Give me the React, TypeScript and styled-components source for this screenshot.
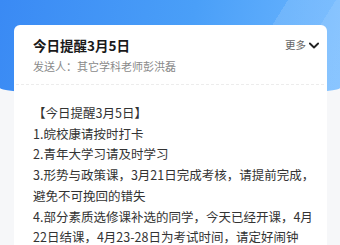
import React from "react";
import styled, { createGlobalStyle } from "styled-components";

const Global = createGlobalStyle`
  html, body { margin: 0; padding: 0; }
  body {
    background: #f6f7f9;
    font-family: "Noto Sans CJK SC", "Noto Sans", sans-serif;
    width: 340px;
    height: 245px;
    overflow: hidden;
  }
`;

const Page = styled.div`
  width: 340px;
  height: 245px;
  overflow: hidden;
`;

const Banner = styled.div`
  height: 96px;
  border-radius: 0 0 50% 50% / 0 0 8px 8px;
  background:
    linear-gradient(122deg, transparent 0 72%, rgba(255,255,255,0.12) 72% 84%, rgba(255,255,255,0.2) 84% 100%),
    linear-gradient(100deg, #3a8af4 0%, #4a9ff8 55%, #6db7ff 100%);
`;

const Card = styled.div`
  margin: -71px 13px 0 14px;
  background: #ffffff;
  border-radius: 6px 6px 0 0;
  height: 230px;
`;

const Header = styled.div`
  display: flex;
  flex-direction: column;
  padding: 10px 4px 8px 17px;
  border-bottom: 1px dashed #ececec;
  margin: 0 3px 0 2px;
`;

const TitleRow = styled.div`
  display: flex;
  align-items: center;
  justify-content: space-between;
  height: 20px;
`;

const Title = styled.div`
  font-size: 13.5px;
  font-weight: 700;
  color: #1a1a1a;
  line-height: 20px;
`;

const More = styled.div`
  display: flex;
  align-items: center;
  gap: 2px;
  font-size: 10.5px;
  color: #666;
  line-height: 20px;
`;

const Sender = styled.div`
  font-size: 11px;
  color: #8a8a8a;
  line-height: 20px;
  margin-top: 1px;
`;

const Body = styled.div`
  padding: 18px 12px 0 19px;
  font-size: 12.5px;
  line-height: 20.7px;
  color: #333;
`;

const Line = styled.div``;

export default function App() {
  return (
    <>
      <Global />
      <Page>
        <Banner />
        <Card>
          <Header>
            <TitleRow>
              <Title>今日提醒3月5日</Title>
              <More>
                更多
                <svg width="12" height="11" viewBox="0 0 12 12" fill="none">
                  <path d="M1.5 3.8 L6 8.2 L10.5 3.8" stroke="#222" strokeWidth="2" strokeLinecap="round" strokeLinejoin="round" />
                </svg>
              </More>
            </TitleRow>
            <Sender>发送人：其它学科老师彭洪磊</Sender>
          </Header>
          <Body>
            <Line>【今日提醒3月5日】</Line>
            <Line>1.皖校康请按时打卡</Line>
            <Line>2.青年大学习请及时学习</Line>
            <Line>3.形势与政策课，3月21日完成考核，请提前完成，避免不可挽回的错失</Line>
            <Line>4.部分素质选修课补选的同学，今天已经开课，4月22日结课，4月23-28日为考试时间，请定好闹钟</Line>
          </Body>
        </Card>
      </Page>
    </>
  );
}
